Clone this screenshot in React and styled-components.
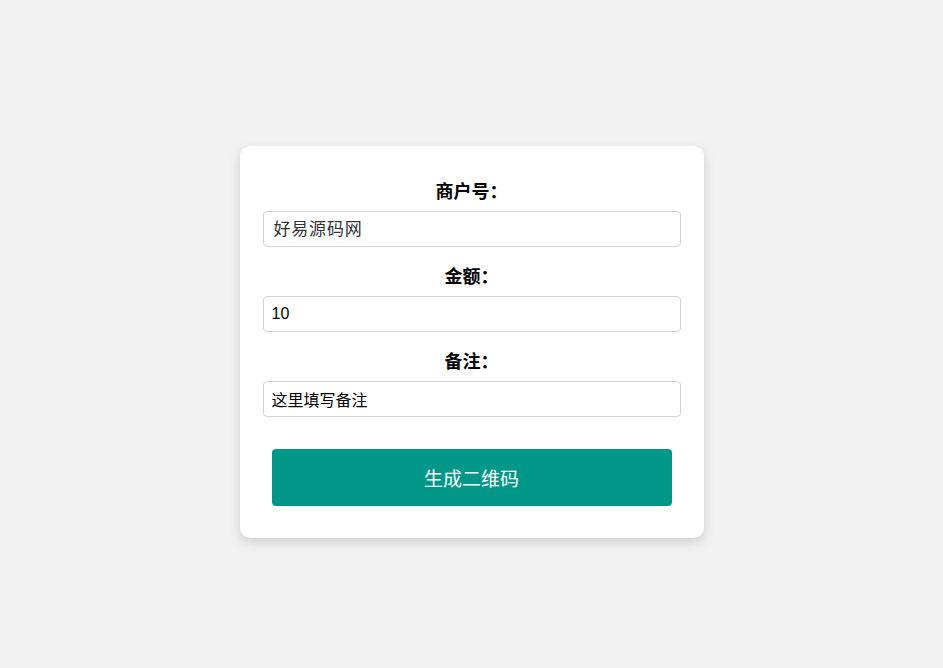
import React, { useState } from 'react';
import styled, { createGlobalStyle } from 'styled-components';

const GlobalStyle = createGlobalStyle`
  body {
    margin: 8px;
    background: #f2f2f2;
    font-family: "Liberation Sans", "Noto Sans CJK SC", sans-serif;
  }
`;

const Page = styled.div`
  height: 100vh;
  display: flex;
  align-items: center;
  justify-content: center;
`;

const Card = styled.form`
  width: 464px;
  box-sizing: border-box;
  padding: 33px 23px 32px;
  background: #fff;
  border-radius: 10px;
  box-shadow: 0 4px 12px rgba(0, 0, 0, 0.15);
  display: flex;
  flex-direction: column;
  gap: 17px;
`;

const Field = styled.div`
  display: flex;
  flex-direction: column;
`;

const Label = styled.label`
  text-align: center;
  font-size: 18px;
  line-height: 24px;
  padding-top: 1px;
  font-weight: 700;
  color: #000;
  margin-bottom: 7px;
`;

const Input = styled.input`
  box-sizing: border-box;
  width: 100%;
  height: 36px;
  border: 1px solid #d4d4d4;
  border-radius: 4px;
  padding: 0 ${p => (p.$wide ? '10px' : '8px')};
  padding-bottom: ${p => (p.$wide ? '4px' : '0')};
  font-family: "Liberation Sans", "Noto Sans CJK SC", sans-serif;
  font-size: ${p => (p.$wide ? '17px' : '16px')};
  letter-spacing: ${p => (p.$wide ? '0.8px' : '0')};
  color: ${p => (p.$wide ? '#333' : '#000')};
  outline: none;
`;

const Button = styled.button`
  margin: 15px 9px 0;
  height: 57px;
  border: none;
  border-radius: 4px;
  background: #009688;
  color: #fff;
  font-family: "Liberation Sans", "Noto Sans CJK SC", sans-serif;
  font-size: 19px;
  cursor: pointer;
`;

export default function App() {
  const [merchant, setMerchant] = useState('好易源码网');
  const [amount, setAmount] = useState('10');
  const [note, setNote] = useState('这里填写备注');

  return (
    <Page>
      <GlobalStyle />
      <Card onSubmit={e => e.preventDefault()}>
        <Field>
          <Label>商户号：</Label>
          <Input $wide value={merchant} onChange={e => setMerchant(e.target.value)} />
        </Field>
        <Field>
          <Label>金额：</Label>
          <Input value={amount} onChange={e => setAmount(e.target.value)} />
        </Field>
        <Field>
          <Label>备注：</Label>
          <Input value={note} onChange={e => setNote(e.target.value)} />
        </Field>
        <Button type="submit">生成二维码</Button>
      </Card>
    </Page>
  );
}
